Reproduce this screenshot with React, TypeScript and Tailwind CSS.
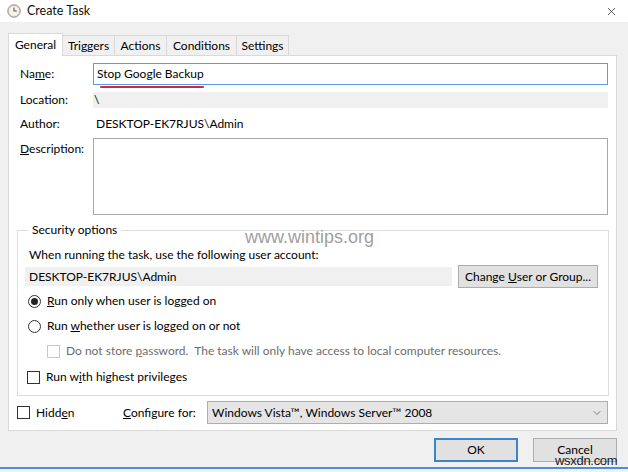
import { X as IconX, ChevronDown as IconChevronDown } from 'lucide-react';

const tabs = [
  { label: 'General', w: 'w-[55px]' },
  { label: 'Triggers', w: 'w-[52px]' },
  { label: 'Actions', w: 'w-[52px]' },
  { label: 'Conditions', w: 'w-[70px]' },
  { label: 'Settings', w: 'w-[52px]' },
];

function ClockIcon() {
  return (
    <svg width="14" height="14" viewBox="0 0 14 14">
      <circle cx="7" cy="7" r="6.2" fill="#e9e4d6" stroke="#8a8a8a" strokeWidth="1" />
      <circle cx="7" cy="7" r="4.6" fill="#f7f5ee" />
      <path d="M7 3.4 V7 H9.8" stroke="#555" strokeWidth="1.1" fill="none" />
    </svg>
  );
}

function Radio({ checked }: { checked?: boolean }) {
  return (
    <span className="w-[13px] h-[13px] rounded-full border border-[#333] bg-white flex items-center justify-center shrink-0">
      {checked && <span className="w-[7px] h-[7px] rounded-full bg-[#222]" />}
    </span>
  );
}

function Check({ disabled }: { disabled?: boolean }) {
  return (
    <span
      className={
        disabled
          ? 'w-[13px] h-[13px] border border-[#c8c8c8] bg-white shrink-0'
          : 'w-[13px] h-[13px] border border-[#333] bg-white shrink-0'
      }
    />
  );
}

export default function App() {
  return (
    <div className="relative w-[628px] h-[472px] overflow-hidden bg-[#f0f0f0] text-[12px] leading-[16px] text-[#000] font-['Segoe_UI',Lato,'Noto_Sans',sans-serif] flex flex-col">
      {/* title bar */}
      <div className="h-[22px] bg-white flex items-center pl-[7px] pr-[10px]">
        <ClockIcon />
        <span className="ml-[6px] text-[12.5px] text-[#111]">Create Task</span>
        <IconX className="ml-auto w-[13px] h-[13px] text-[#222]" strokeWidth={1.3} />
      </div>

      {/* tabs */}
      <div className="pl-[8px] pt-[10px] flex items-end h-[33px]">
        {tabs.map((t, i) => (
          <div
            key={t.label}
            className={
              i === 0
                ? `${t.w} h-[23px] bg-white border border-b-0 border-[#d9d9d9] flex items-center justify-center -mb-px relative z-10`
                : `${t.w} h-[20px] bg-[#f0f0f0] border border-l-0 border-b-0 border-[#d9d9d9] flex items-center justify-center`
            }
          >
            {t.label}
          </div>
        ))}
      </div>

      {/* panel */}
      <div className="ml-[8px] w-[609px] h-[376px] bg-white border border-[#d9d9d9] flex flex-col">
        <div className="mt-[7px] flex items-center h-[22px]">
          <span className="w-[84px] pl-[11px]">
            Na<u>m</u>e:
          </span>
          <div className="relative w-[515px] h-[22px] border border-[#5a9de0] flex items-center pl-[3px]">
            Stop Google Backup
            <span className="absolute left-[6px] top-[22px] w-[104px] h-[2px] bg-[#d6283a] rounded-full" />
          </div>
        </div>

        <div className="mt-[7px] flex items-center h-[16px]">
          <span className="w-[84px] pl-[11px]">Location:</span>
          <div className="w-[515px] h-[16px] bg-[#f0f0f0] pl-[1px]">\</div>
        </div>

        <div className="mt-[8px] flex items-center h-[16px]">
          <span className="w-[84px] pl-[11px]">Author:</span>
          <span className="pl-[3px]">DESKTOP-EK7RJUS\Admin</span>
        </div>

        <div className="mt-[6px] flex items-start">
          <span className="w-[84px] pl-[11px] pt-[3px]">
            <u>D</u>escription:
          </span>
          <div className="w-[515px] h-[77px] border border-[#a8a8a8] bg-white" />
        </div>

        {/* security options */}
        <fieldset className="mt-[7px] ml-[8px] w-[592px] border border-[#dcdcdc] pl-[7px] pr-[9px] pb-[10px]">
          <legend className="ml-[3px] px-[4px] leading-[16px]">Security options</legend>
          <div className="mt-[9px] h-[16px] pl-[4px]">When running the task, use the following user account:</div>
          <div className="mt-[2px] flex items-center h-[23px]">
            <div className="w-[427px] h-[19px] bg-[#f0f0f0] flex items-center pl-[4px]">DESKTOP-EK7RJUS\Admin</div>
            <button className="ml-[6px] w-[140px] h-[23px] bg-[#e1e1e1] border border-[#adadad] flex items-center justify-center">
              Change&nbsp;<u>U</u>ser or Group...
            </button>
          </div>
          <div className="mt-[5px] h-[16px] flex items-center gap-[6px] pl-[3px]">
            <Radio checked />
            <span>
              <u>R</u>un only when user is logged on
            </span>
          </div>
          <div className="mt-[9px] h-[16px] flex items-center gap-[6px] pl-[3px]">
            <Radio />
            <span>
              Run <u>w</u>hether user is logged on or not
            </span>
          </div>
          <div className="mt-[9px] h-[16px] flex items-center gap-[6px] pl-[22px] text-[#6d6d6d]">
            <Check disabled />
            <span className="whitespace-pre">
              Do not store <u>p</u>assword.  The task will only have access to local computer resources.
            </span>
          </div>
          <div className="mt-[10px] h-[16px] flex items-center gap-[6px] pl-[2px]">
            <Check />
            <span>
              Run w<u>i</u>th highest privileges
            </span>
          </div>
        </fieldset>

        <div className="mt-[5px] h-[23px] flex items-center pl-[8px]">
          <Check />
          <span className="ml-[6px] w-[87px]">
            Hidd<u>e</u>n
          </span>
          <span className="w-[84px]">
            <u>C</u>onfigure for:
          </span>
          <div className="w-[401px] h-[23px] bg-[#e5e5e5] border border-[#adadad] flex items-center pl-[4px] pr-[4px]">
            <span>Windows Vista™, Windows Server™ 2008</span>
            <IconChevronDown className="ml-auto w-[12px] h-[12px] text-[#555]" strokeWidth={1.5} />
          </div>
        </div>
      </div>

      {/* buttons */}
      <div className="mt-[7px] flex justify-end gap-[15px] pr-[11px]">
        <button className="w-[84px] h-[24px] bg-[#e1e1e1] border-2 border-[#3b86c8] flex items-center justify-center">
          OK
        </button>
        <button className="w-[84px] h-[24px] bg-[#e1e1e1] border border-[#adadad] flex items-center justify-center">
          Cancel
        </button>
      </div>
      <div className="mt-auto mb-[3px] h-[2px] bg-[#4a8fd6]" />

      {/* watermarks */}
      <span className="absolute left-[245px] top-[228px] text-[18px] leading-[18px] text-[#a0a0a0] font-['Liberation_Sans',sans-serif]">
        www.wintips.org
      </span>
      <span className="absolute left-[555px] top-[454px] text-[13px] leading-[13px] tracking-[-0.3px] text-[#222] font-['Liberation_Sans',sans-serif]">
        wsxdn.com
      </span>
    </div>
  );
}
